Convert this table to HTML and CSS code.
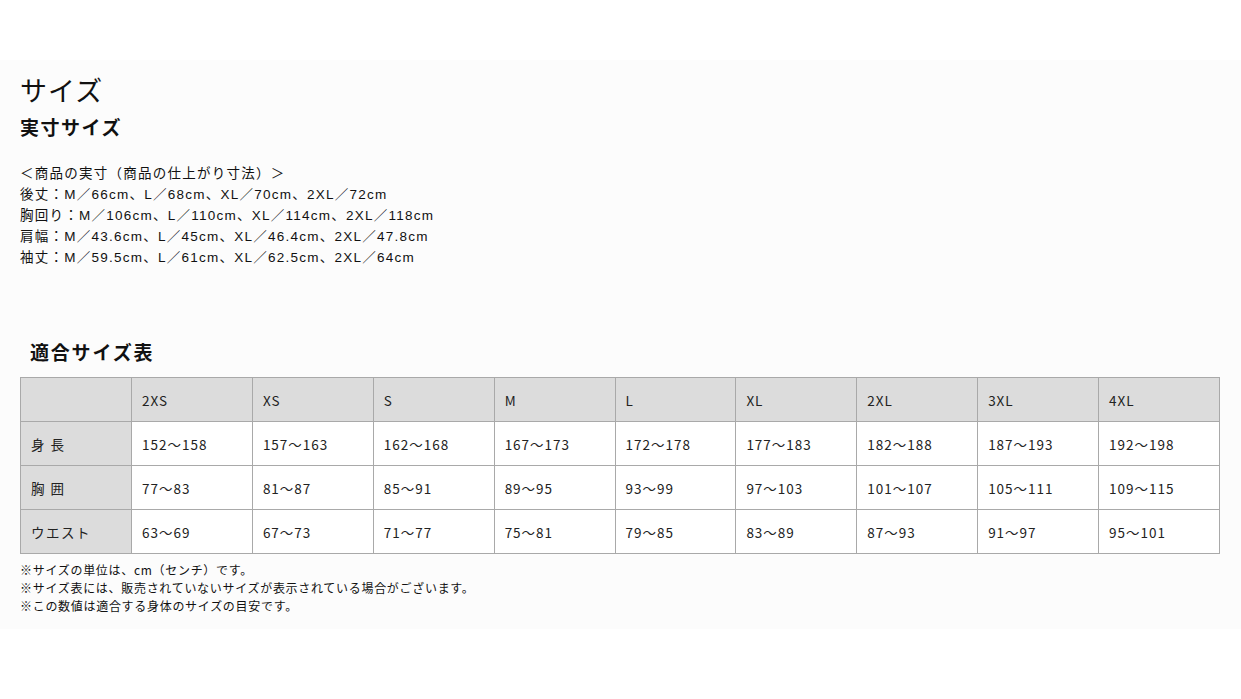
FILE: index.html
```html
<!DOCTYPE html>
<html lang="ja">
<head>
<meta charset="utf-8">
<title>サイズ</title>
<link rel="stylesheet" href="styles.css">
</head>
<body>
<div class="top-space"></div>
<section class="panel">
  <h1 class="title">サイズ</h1>
  <h2 class="subtitle">実寸サイズ</h2>
  <div class="actual">
    <p>＜商品の実寸（商品の仕上がり寸法）＞</p>
    <p>後丈：M／66cm、L／68cm、XL／70cm、2XL／72cm</p>
    <p>胸回り：M／106cm、L／110cm、XL／114cm、2XL／118cm</p>
    <p>肩幅：M／43.6cm、L／45cm、XL／46.4cm、2XL／47.8cm</p>
    <p>袖丈：M／59.5cm、L／61cm、XL／62.5cm、2XL／64cm</p>
  </div>
  <h2 class="subtitle fit">適合サイズ表</h2>
  <table class="size-table">
    <colgroup>
      <col class="c-head">
      <col><col><col><col><col><col><col><col><col>
    </colgroup>
    <thead>
      <tr>
        <th class="corner"></th>
        <th>2XS</th><th>XS</th><th>S</th><th>M</th><th>L</th><th>XL</th><th>2XL</th><th>3XL</th><th>4XL</th>
      </tr>
    </thead>
    <tbody>
      <tr>
        <th class="rowhead">身 長</th>
        <td>152～158</td><td>157～163</td><td>162～168</td><td>167～173</td><td>172～178</td><td>177～183</td><td>182～188</td><td>187～193</td><td>192～198</td>
      </tr>
      <tr>
        <th class="rowhead">胸 囲</th>
        <td>77～83</td><td>81～87</td><td>85～91</td><td>89～95</td><td>93～99</td><td>97～103</td><td>101～107</td><td>105～111</td><td>109～115</td>
      </tr>
      <tr>
        <th class="rowhead">ウエスト</th>
        <td>63～69</td><td>67～73</td><td>71～77</td><td>75～81</td><td>79～85</td><td>83～89</td><td>87～93</td><td>91～97</td><td>95～101</td>
      </tr>
    </tbody>
  </table>
  <div class="notes">
    <p>※サイズの単位は、cm（センチ）です。</p>
    <p>※サイズ表には、販売されていないサイズが表示されている場合がございます。</p>
    <p>※この数値は適合する身体のサイズの目安です。</p>
  </div>
</section>
</body>
</html>
```
FILE: styles.css
```css
html, body {
  margin: 0;
  padding: 0;
  background: #ffffff;
}
body {
  font-family: "Noto Sans CJK JP", "Noto Sans", sans-serif;
  color: #111;
}
.top-space {
  height: 60px;
}
.panel {
  background: #fcfcfc;
  padding: 12px 20px 14px 20px;
}
.title {
  margin: 0;
  font-size: 27px;
  font-weight: 400;
  line-height: 36px;
  letter-spacing: 1px;
}
.subtitle {
  margin: 5px 0 0 0;
  font-size: 19px;
  font-weight: 700;
  line-height: 28px;
  letter-spacing: 1.5px;
}
.actual {
  margin-top: 22px;
  font-family: "Liberation Sans", "Noto Sans CJK JP", sans-serif;
  font-size: 13.5px;
  line-height: 21px;
  letter-spacing: 1.25px;
}
.actual p {
  margin: 0;
}
.subtitle.fit {
  margin: 70px 0 0 10px;
  letter-spacing: 1.8px;
}
.size-table {
  margin-top: 11px;
  width: 1200px;
  border-collapse: collapse;
  table-layout: fixed;
  font-size: 13.5px;
  letter-spacing: 1px;
}
.c-head {
  width: 111px;
}
.size-table th,
.size-table td {
  border: 1px solid #a9a9a9;
  height: 44px;
  padding: 0 10px;
  text-align: left;
  font-weight: 400;
  color: #222;
  box-sizing: border-box;
}
.size-table thead th {
  background: #dcdcdc;
}
.size-table .rowhead {
  background: #dcdcdc;
  letter-spacing: 1.5px;
}
.size-table td {
  background: #ffffff;
}
.notes {
  margin-top: 7px;
  font-size: 12px;
  line-height: 18px;
  letter-spacing: 0.7px;
}
.notes p {
  margin: 0;
}
```
